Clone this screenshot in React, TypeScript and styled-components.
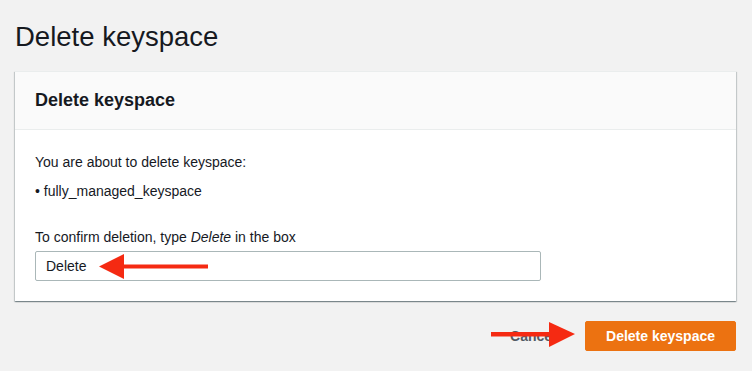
import { createGlobalStyle, styled } from "styled-components";

const GlobalStyle = createGlobalStyle`
  html, body {
    margin: 0;
    padding: 0;
    background: #f2f2f2;
  }
  body {
    font-family: "Liberation Sans", Arial, sans-serif;
    color: #16191f;
  }
`;

const Page = styled.div`
  padding: 20px 16px 0 15px;
`;

const PageTitle = styled.h1`
  margin: 0;
  font-size: 27.5px;
  font-weight: 400;
  line-height: 34px;
  color: #16191f;
`;

const Card = styled.div`
  margin-top: 17px;
  background: #ffffff;
  box-shadow: 0 1px 1px 0 rgba(0, 28, 36, 0.3),
    1px 1px 1px 0 rgba(0, 28, 36, 0.15), -1px 1px 1px 0 rgba(0, 28, 36, 0.15);
  border-top: 1px solid #eaeded;
`;

const CardHeader = styled.div`
  height: 57px;
  display: flex;
  align-items: center;
  padding: 0 20px;
  background: #fafafa;
  border-bottom: 1px solid #eaeded;
`;

const CardTitle = styled.h2`
  margin: 0;
  font-size: 18px;
  font-weight: 700;
  color: #16191f;
`;

const CardBody = styled.div`
  padding: 22px 20px 20px;
  display: flex;
  flex-direction: column;
`;

const Text = styled.p<{ $gap?: number }>`
  margin: 0;
  margin-top: ${(props) => props.$gap ?? 0}px;
  font-size: 14px;
  line-height: 20px;
  color: #16191f;
`;

const FieldLabel = styled.label`
  margin-top: 26px;
  font-size: 14px;
  line-height: 20px;
  color: #16191f;
`;

const InputWrap = styled.div`
  position: relative;
  width: 506px;
  margin-top: 4px;
`;

const Input = styled.input`
  box-sizing: border-box;
  width: 100%;
  height: 30px;
  padding: 0 10px;
  border: 1px solid #aab7b8;
  border-radius: 2px;
  font-family: inherit;
  font-size: 14px;
  color: #16191f;
  background: #fff;
  outline: none;
`;

const Footer = styled.div`
  display: flex;
  justify-content: flex-end;
  align-items: center;
  gap: 29px;
  margin-top: 20px;
`;

const CancelWrap = styled.div`
  position: relative;
`;

const LinkButton = styled.button`
  background: none;
  border: none;
  padding: 4px 0;
  font-family: inherit;
  font-size: 14px;
  font-weight: 700;
  color: #545b64;
  cursor: pointer;
`;

const PrimaryButton = styled.button`
  height: 30px;
  padding: 0 20px;
  background: #ec7211;
  border: 1px solid #ec7211;
  border-radius: 2px;
  font-family: inherit;
  font-size: 14px;
  font-weight: 700;
  color: #ffffff;
  cursor: pointer;
`;

const Arrow = styled.svg<{ $left: number; $top: number }>`
  position: absolute;
  left: ${(props) => props.$left}px;
  top: ${(props) => props.$top}px;
  overflow: visible;
  pointer-events: none;
`;

export default function App() {
  return (
    <>
      <GlobalStyle />
      <Page>
        <PageTitle>Delete keyspace</PageTitle>
        <Card>
          <CardHeader>
            <CardTitle>Delete keyspace</CardTitle>
          </CardHeader>
          <CardBody>
            <Text>You are about to delete keyspace:</Text>
            <Text $gap={9}>• fully_managed_keyspace</Text>
            <FieldLabel>
              To confirm deletion, type <i>Delete</i> in the box
            </FieldLabel>
            <InputWrap>
              <Input defaultValue="Delete" />
              <Arrow $left={64} $top={2} width="110" height="26" viewBox="0 0 110 26">
                <path d="M24 11.5 H109 V15.5 H24 Z" fill="#f52a12" />
                <path d="M0 13.5 L25 1 L25 26 Z" fill="#f52a12" />
              </Arrow>
            </InputWrap>
          </CardBody>
        </Card>
        <Footer>
          <CancelWrap>
            <LinkButton>Cancel</LinkButton>
            <Arrow $left={-19} $top={-2} width="85" height="25" viewBox="0 0 85 25">
              <path d="M0 10 H60 V14.5 H0 Z" fill="#f52a12" />
              <path d="M58 0 L84 12 L58 25 Z" fill="#f52a12" />
            </Arrow>
          </CancelWrap>
          <PrimaryButton>Delete keyspace</PrimaryButton>
        </Footer>
      </Page>
    </>
  );
}
